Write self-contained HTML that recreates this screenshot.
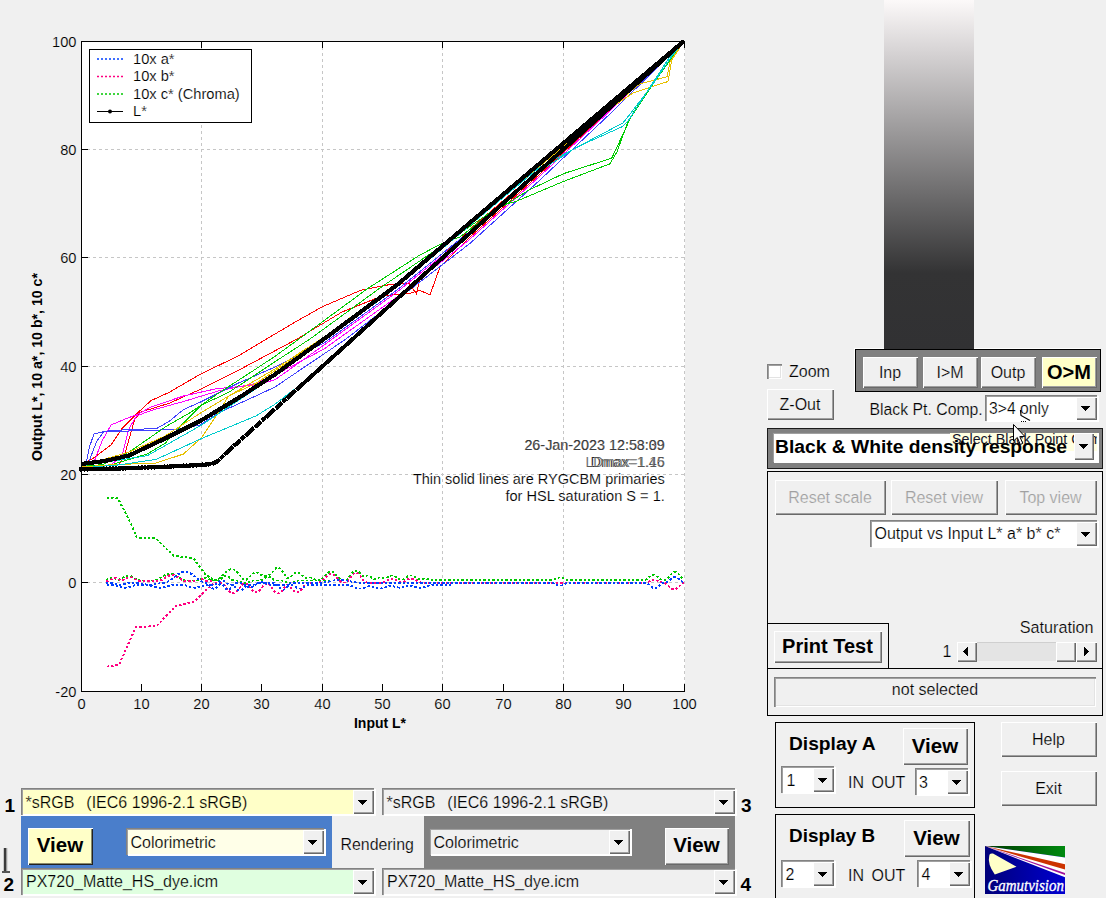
<!DOCTYPE html>
<html><head><meta charset="utf-8"><title>Gamutvision</title>
<style>
html,body{margin:0;padding:0;background:#f0f0f0;}
#root{position:relative;width:1106px;height:898px;overflow:hidden;background:#f0f0f0;font-family:"Liberation Sans",sans-serif;font-size:16px;color:#000;}
#root div{position:absolute;box-sizing:border-box;white-space:nowrap;}
.b{background:#f0f0f0;box-shadow:inset 1px 1px #fff,inset -1px -1px #696969,inset -2px -2px #a0a0a0;}
.b.y{background:#ffffc8;}
.b.dk{box-shadow:inset 1px 1px #fff,inset -1px -1px #222,inset -2px -2px #8a8a6a;}
.dd{box-shadow:inset 1px 1px #828282,inset 2px 2px #a0a0a0,inset 0 -1px #fff,2px 1px 0 #fff;}
.sunk{box-shadow:inset 1px 1px #828282,inset 2px 2px #a0a0a0,inset -1px -1px #fff,inset -2px -2px #e3e3e3;}
.ar{width:9px;height:5px;background:linear-gradient(#000,#000) 0 0/9px 1px no-repeat,linear-gradient(#000,#000) 1px 1px/7px 1px no-repeat,linear-gradient(#000,#000) 2px 2px/5px 1px no-repeat,linear-gradient(#000,#000) 3px 3px/3px 1px no-repeat,linear-gradient(#000,#000) 4px 4px/1px 1px no-repeat;}
.al{width:5px;height:9px;background:linear-gradient(#000,#000) 4px 0/1px 9px no-repeat,linear-gradient(#000,#000) 3px 1px/1px 7px no-repeat,linear-gradient(#000,#000) 2px 2px/1px 5px no-repeat,linear-gradient(#000,#000) 1px 3px/1px 3px no-repeat,linear-gradient(#000,#000) 0 4px/1px 1px no-repeat;}
.arr{width:5px;height:9px;background:linear-gradient(#000,#000) 0 0/1px 9px no-repeat,linear-gradient(#000,#000) 1px 1px/1px 7px no-repeat,linear-gradient(#000,#000) 2px 2px/1px 5px no-repeat,linear-gradient(#000,#000) 3px 3px/1px 3px no-repeat,linear-gradient(#000,#000) 4px 4px/1px 1px no-repeat;}
.fr{border:1px solid #000;}

</style></head><body>
<div id="root">
<svg width="1106" height="898" style="position:absolute;left:0;top:0" font-family="Liberation Sans, sans-serif">
<rect x="81" y="41" width="604" height="651" fill="#fff"/>
<line x1="201.5" y1="41" x2="201.5" y2="691" stroke="#c6c6c6" stroke-width="1" stroke-dasharray="3 3"/>
<line x1="322.5" y1="41" x2="322.5" y2="691" stroke="#c6c6c6" stroke-width="1" stroke-dasharray="3 3"/>
<line x1="442.5" y1="41" x2="442.5" y2="691" stroke="#c6c6c6" stroke-width="1" stroke-dasharray="3 3"/>
<line x1="563.5" y1="41" x2="563.5" y2="691" stroke="#c6c6c6" stroke-width="1" stroke-dasharray="3 3"/>
<line x1="684.5" y1="41" x2="684.5" y2="691" stroke="#c6c6c6" stroke-width="1" stroke-dasharray="3 3"/>
<line x1="81" y1="582.5" x2="684" y2="582.5" stroke="#c6c6c6" stroke-width="1" stroke-dasharray="3 3"/>
<line x1="81" y1="474.5" x2="684" y2="474.5" stroke="#c6c6c6" stroke-width="1" stroke-dasharray="3 3"/>
<line x1="81" y1="366.5" x2="684" y2="366.5" stroke="#c6c6c6" stroke-width="1" stroke-dasharray="3 3"/>
<line x1="81" y1="257.5" x2="684" y2="257.5" stroke="#c6c6c6" stroke-width="1" stroke-dasharray="3 3"/>
<line x1="81" y1="149.5" x2="684" y2="149.5" stroke="#c6c6c6" stroke-width="1" stroke-dasharray="3 3"/>
<polyline points="81.0,465.0 93.0,458.4 111.0,444.9 122.0,428.6 138.3,412.3 151.0,400.6 169.0,392.4 201.6,373.5 237.7,356.3 264.9,340.0 293.5,323.0 322.4,306.7 360.4,290.4 387.5,285.0 409.0,283.0 416.5,294.0 420.0,277.8 469.0,230.0 540.0,169.0 612.0,106.0 684.0,41.0" fill="none" stroke="#ff0000" stroke-width="1" stroke-linejoin="round" shape-rendering="crispEdges" />
<polyline points="81.0,466.0 118.4,464.8 123.8,457.5 134.7,419.6 140.0,412.3 169.0,403.3 201.6,388.8 237.7,370.7 275.0,350.8 297.0,339.0 342.0,312.0 382.0,296.0 411.0,293.0 420.0,290.4 430.0,295.0 440.0,267.0 469.0,238.0 540.0,174.0 612.0,108.0 684.0,41.0" fill="none" stroke="#ff0000" stroke-width="1" stroke-linejoin="round" shape-rendering="crispEdges" />
<polyline points="81.0,466.0 93.0,464.8 102.0,441.0 111.0,425.0 123.8,419.6 138.3,414.0 151.0,407.0 183.5,396.0 216.0,388.8 255.8,385.0 275.0,379.8 324.0,345.0 397.0,292.0 469.0,234.0 540.0,172.0 612.0,107.0 684.0,41.0" fill="none" stroke="#ff00ff" stroke-width="1" stroke-linejoin="round" shape-rendering="crispEdges" />
<polyline points="81.0,467.0 111.0,464.8 122.0,455.7 129.0,428.6 136.5,416.0 151.0,410.5 183.5,401.5 219.7,390.6 255.8,383.4 275.0,375.0 324.0,349.0 397.0,297.0 469.0,240.0 540.0,176.0 612.0,109.0 684.0,41.0" fill="none" stroke="#ff00ff" stroke-width="1" stroke-linejoin="round" shape-rendering="crispEdges" />
<polyline points="81.0,466.0 85.8,464.8 89.5,446.7 94.0,434.0 102.0,431.9 147.3,430.4 176.3,429.5 199.8,425.0 219.7,412.3 255.8,396.0 275.0,387.0 346.0,339.0 470.0,243.4 540.0,180.0 612.0,112.0 684.0,41.0" fill="none" stroke="#4040ff" stroke-width="1" stroke-linejoin="round" shape-rendering="crispEdges" />
<polyline points="81.0,467.0 87.7,464.8 96.7,441.3 104.0,431.3 129.2,429.5 156.4,428.6 169.0,421.4 183.5,409.6 201.6,401.5 237.7,383.4 275.0,367.0 324.0,343.0 397.0,290.0 469.0,232.0 540.0,170.0 612.0,106.0 684.0,41.0" fill="none" stroke="#4040ff" stroke-width="1" stroke-linejoin="round" shape-rendering="crispEdges" />
<polyline points="81.0,466.0 102.0,464.8 129.2,452.0 147.3,439.5 165.4,426.8 190.7,412.3 219.7,392.4 255.8,369.0 275.0,356.3 299.0,339.0 367.6,288.6 418.3,256.0 441.8,243.4 460.0,237.0 490.0,214.0 529.0,190.0 563.6,173.6 611.7,158.2 618.6,143.6 630.6,117.8 654.6,81.7 684.0,41.0" fill="none" stroke="#00cc00" stroke-width="1" stroke-linejoin="round" shape-rendering="crispEdges" />
<polyline points="81.0,467.0 111.0,464.8 147.3,454.0 165.4,443.0 183.5,423.0 201.6,405.0 228.7,392.4 275.0,361.7 310.0,339.0 380.0,288.0 430.0,254.0 460.0,233.0 500.0,206.0 517.0,201.0 563.6,181.4 610.0,163.8 616.8,152.2 628.9,119.5 653.0,82.5 684.0,41.0" fill="none" stroke="#00cc00" stroke-width="1" stroke-linejoin="round" shape-rendering="crispEdges" />
<polyline points="81.0,466.0 129.2,452.0 165.4,435.8 201.6,412.3 237.7,390.6 275.0,369.0 324.0,337.0 397.0,283.0 469.0,224.0 540.0,165.0 600.0,115.0 633.0,93.0 668.0,81.5 671.7,60.4 684.0,41.0" fill="none" stroke="#e6c000" stroke-width="1" stroke-linejoin="round" shape-rendering="crispEdges" />
<polyline points="81.0,467.0 111.0,464.8 156.4,463.0 183.5,454.0 201.6,437.6 216.0,416.0 228.7,396.0 255.8,383.4 275.0,370.7 324.0,338.0 397.0,284.0 469.0,225.0 540.0,166.0 610.0,108.0 640.0,83.8 667.0,76.8 670.0,62.0 684.0,41.0" fill="none" stroke="#e6c000" stroke-width="1" stroke-linejoin="round" shape-rendering="crispEdges" />
<polyline points="81.0,468.0 120.0,464.8 156.4,459.3 201.6,438.5 255.8,416.0 275.0,404.2 300.0,385.0 350.0,341.0 418.0,279.0 469.0,234.0 540.0,171.0 575.6,147.9 622.9,123.0 630.6,113.5 654.6,81.7 670.5,58.0 684.0,41.0" fill="none" stroke="#00cccc" stroke-width="1" stroke-linejoin="round" shape-rendering="crispEdges" />
<polyline points="81.0,466.0 147.3,455.7 201.6,425.0 275.0,376.0 324.0,341.0 397.0,287.0 469.0,226.0 540.0,167.0 580.8,145.3 622.9,126.4 628.0,121.2 652.0,84.0 669.0,58.0 684.0,41.0" fill="none" stroke="#00cccc" stroke-width="1" stroke-linejoin="round" shape-rendering="crispEdges" />
<polyline points="106.7,497.8 117.9,498.3 131.2,524.5 136.8,537.5 155.7,538.4 173.5,555.7 193.6,558.4 204.7,573.5 212.0,579.0 214.0,580.4 216.0,580.0 218.0,579.0 220.0,577.8 222.0,576.2 224.0,574.0 226.0,571.9 228.0,570.3 230.0,569.4 232.0,569.2 234.0,569.6 236.0,570.8 238.0,572.9 240.0,575.6 242.0,578.0 244.0,579.8 246.0,579.9 248.0,578.4 250.0,576.4 252.0,574.4 254.0,572.9 256.0,572.4 258.0,572.9 260.0,574.2 262.0,575.2 264.0,575.6 266.0,576.0 268.0,575.7 270.0,574.4 272.0,572.7 274.0,570.5 276.0,568.3 278.0,567.4 280.0,568.3 282.0,570.6 284.0,573.9 286.0,577.0 288.0,578.4 290.0,577.4 292.0,575.4 294.0,573.6 296.0,572.5 298.0,572.5 300.0,573.6 302.0,575.4 304.0,577.0 306.0,577.7 308.0,577.7 310.0,577.4 312.0,577.8 314.0,578.9 316.0,580.0 318.0,580.4 320.0,580.2 322.0,579.1 324.0,577.1 326.0,574.7 328.0,572.7 330.0,571.6 332.0,571.6 334.0,572.7 336.0,574.7 338.0,577.1 340.0,579.1 342.0,580.2 344.0,580.4 346.0,580.2 348.0,578.7 350.0,576.1 352.0,573.3 354.0,571.2 356.0,570.4 358.0,571.2 360.0,573.3 362.0,575.4 364.0,576.2 366.0,575.9 368.0,575.4 370.0,576.1 372.0,577.9 374.0,579.2 376.0,578.9 378.0,577.8 380.0,577.4 382.0,577.7 384.0,578.0 386.0,577.8 388.0,576.9 390.0,575.8 392.0,575.4 394.0,575.8 396.0,576.9 398.0,578.3 400.0,579.5 402.0,579.9 404.0,578.9 406.0,577.5 408.0,576.3 410.0,575.5 412.0,575.5 414.0,576.3 416.0,577.5 418.0,578.9 420.0,579.4 422.0,579.0 424.0,578.5 426.0,578.5 428.0,579.0 430.0,579.8 432.0,580.3 434.0,580.4 436.0,580.4 438.0,580.4 440.0,580.4 442.0,580.4 444.0,580.4 446.0,580.4 448.0,580.4 450.0,580.4 452.0,580.4 454.0,580.4 456.0,580.4 458.0,580.4 460.0,580.4 462.0,580.4 464.0,580.4 466.0,580.4 468.0,580.4 470.0,580.4 472.0,580.4 474.0,580.4 476.0,580.4 478.0,580.4 480.0,580.4 482.0,580.4 484.0,580.4 486.0,580.4 488.0,580.4 490.0,580.4 492.0,580.4 494.0,580.4 496.0,580.4 498.0,580.4 500.0,580.4 502.0,580.4 504.0,580.4 506.0,580.4 508.0,580.4 510.0,580.4 512.0,580.4 514.0,580.4 516.0,580.4 518.0,580.4 520.0,580.4 522.0,580.4 524.0,580.4 526.0,580.4 528.0,580.4 530.0,580.4 532.0,580.4 534.0,580.4 536.0,580.4 538.0,580.4 540.0,580.4 542.0,580.4 544.0,580.4 546.0,580.4 548.0,580.4 550.0,580.4 552.0,580.3 554.0,579.6 556.0,578.6 558.0,577.8 560.0,577.4 562.0,577.8 564.0,578.6 566.0,579.6 568.0,580.3 570.0,580.4 572.0,580.4 574.0,580.4 576.0,580.4 578.0,580.4 580.0,580.4 582.0,580.4 584.0,580.4 586.0,580.4 588.0,580.4 590.0,580.4 592.0,580.4 594.0,580.4 596.0,580.4 598.0,580.4 600.0,580.4 602.0,580.4 604.0,580.4 606.0,580.4 608.0,580.4 610.0,580.4 612.0,580.4 614.0,580.4 616.0,580.4 618.0,580.4 620.0,580.4 622.0,580.4 624.0,580.4 626.0,580.4 628.0,580.4 630.0,580.4 632.0,580.4 634.0,580.4 636.0,580.4 638.0,580.4 640.0,580.4 642.0,580.4 644.0,580.4 646.0,579.6 648.0,578.1 650.0,576.4 652.0,575.1 654.0,574.8 656.0,575.6 658.0,577.1 660.0,578.8 662.0,580.1 664.0,580.4 666.0,579.7 668.0,577.9 670.0,575.6 672.0,573.4 674.0,572.2 676.0,572.2 678.0,573.4 680.0,575.6 682.0,577.9 684.0,579.7" fill="none" stroke="#00c800" stroke-width="1.9" stroke-linejoin="round" shape-rendering="crispEdges" stroke-dasharray="2.4 2"/>
<polyline points="106.7,666.6 119.0,664.9 135.7,627.4 156.8,625.9 175.8,605.8 193.6,602.0 204.7,591.4 212.0,585.0 214.0,582.6 216.0,582.6 218.0,582.6 220.0,582.6 222.0,583.2 224.0,585.0 226.0,587.4 228.0,590.1 230.0,592.2 232.0,593.4 234.0,593.4 236.0,592.2 238.0,590.1 240.0,587.4 242.0,585.0 244.0,583.2 246.0,583.3 248.0,585.1 250.0,587.6 252.0,590.1 254.0,591.9 256.0,592.6 258.0,591.9 260.0,590.1 262.0,587.6 264.0,585.1 266.0,583.3 268.0,583.3 270.0,585.4 272.0,588.1 274.0,590.9 276.0,592.9 278.0,593.6 280.0,592.9 282.0,590.9 284.0,588.1 286.0,585.5 288.0,584.8 290.0,586.3 292.0,588.9 294.0,591.1 296.0,592.4 298.0,592.4 300.0,591.1 302.0,588.9 304.0,586.3 306.0,584.1 308.0,582.8 310.0,582.6 312.0,582.6 314.0,582.6 316.0,582.6 318.0,582.6 320.0,582.4 322.0,581.3 324.0,579.3 326.0,576.9 328.0,574.9 330.0,573.8 332.0,573.8 334.0,574.9 336.0,576.9 338.0,579.3 340.0,581.3 342.0,582.4 344.0,582.6 346.0,582.4 348.0,580.9 350.0,578.3 352.0,575.5 354.0,573.4 356.0,572.6 358.0,573.4 360.0,575.5 362.0,578.3 364.0,580.9 366.0,582.4 368.0,582.6 370.0,582.6 372.0,582.6 374.0,582.6 376.0,582.6 378.0,582.6 380.0,582.6 382.0,582.5 384.0,581.9 386.0,580.9 388.0,579.8 390.0,578.9 392.0,578.6 394.0,578.9 396.0,579.8 398.0,580.9 400.0,581.9 402.0,582.2 404.0,581.4 406.0,580.3 408.0,579.3 410.0,578.7 412.0,578.7 414.0,579.3 416.0,580.3 418.0,581.4 420.0,582.3 422.0,582.6 424.0,582.6 426.0,582.6 428.0,582.6 430.0,582.6 432.0,582.6 434.0,582.6 436.0,582.6 438.0,582.6 440.0,582.6 442.0,582.6 444.0,582.6 446.0,582.6 448.0,582.6 450.0,582.6 452.0,582.6 454.0,582.6 456.0,582.6 458.0,582.6 460.0,582.6 462.0,582.6 464.0,582.6 466.0,582.6 468.0,582.6 470.0,582.6 472.0,582.6 474.0,582.6 476.0,582.6 478.0,582.6 480.0,582.6 482.0,582.6 484.0,582.6 486.0,582.6 488.0,582.6 490.0,582.6 492.0,582.6 494.0,582.6 496.0,582.6 498.0,582.6 500.0,582.6 502.0,582.6 504.0,582.6 506.0,582.6 508.0,582.6 510.0,582.6 512.0,582.6 514.0,582.6 516.0,582.6 518.0,582.6 520.0,582.6 522.0,582.6 524.0,582.6 526.0,582.6 528.0,582.6 530.0,582.6 532.0,582.6 534.0,582.6 536.0,582.6 538.0,582.6 540.0,582.6 542.0,582.6 544.0,582.6 546.0,582.6 548.0,582.6 550.0,582.6 552.0,582.6 554.0,582.6 556.0,582.6 558.0,582.6 560.0,582.6 562.0,582.6 564.0,582.6 566.0,582.6 568.0,582.6 570.0,582.6 572.0,582.6 574.0,582.6 576.0,582.6 578.0,582.6 580.0,582.6 582.0,582.6 584.0,582.6 586.0,582.6 588.0,582.6 590.0,582.6 592.0,582.6 594.0,582.6 596.0,582.6 598.0,582.6 600.0,582.6 602.0,582.6 604.0,582.6 606.0,582.6 608.0,582.6 610.0,582.6 612.0,582.6 614.0,582.6 616.0,582.6 618.0,582.6 620.0,582.6 622.0,582.6 624.0,582.6 626.0,582.6 628.0,582.6 630.0,582.6 632.0,582.6 634.0,582.6 636.0,582.6 638.0,582.6 640.0,582.6 642.0,582.6 644.0,582.6 646.0,582.5 648.0,581.9 650.0,580.8 652.0,580.0 654.0,579.6 656.0,580.0 658.0,580.8 660.0,581.9 662.0,582.5 664.0,582.7 666.0,583.8 668.0,585.6 670.0,587.6 672.0,589.0 674.0,589.6 676.0,589.0 678.0,587.6 680.0,585.6 682.0,583.8 684.0,582.7" fill="none" stroke="#ff0080" stroke-width="1.9" stroke-linejoin="round" shape-rendering="crispEdges" stroke-dasharray="2.4 2"/>
<polyline points="106.0,580.1 108.0,579.0 110.0,577.9 112.0,577.5 114.0,577.9 116.0,579.0 118.0,579.7 120.0,579.2 122.0,578.0 124.0,576.8 126.0,575.8 128.0,575.5 130.0,575.8 132.0,576.8 134.0,578.0 136.0,579.2 138.0,580.2 140.0,580.5 142.0,580.5 144.0,580.5 146.0,580.5 148.0,580.5 150.0,580.5 152.0,580.5 154.0,580.5 156.0,580.2 158.0,579.5 160.0,578.3 162.0,577.0 164.0,575.7 166.0,574.5 168.0,573.8 170.0,573.5 172.0,573.8 174.0,574.5 176.0,575.7 178.0,577.0 180.0,578.3 182.0,579.5 184.0,580.2 186.0,580.5 188.0,580.5 190.0,580.5 192.0,580.5 194.0,580.5 196.0,580.5 198.0,580.4 200.0,579.6 202.0,578.4 204.0,577.6 206.0,577.6 208.0,578.4 210.0,579.6 212.0,580.4 214.0,580.5 216.0,580.5 218.0,580.5 220.0,579.8 222.0,578.0 224.0,576.2 226.0,575.5 228.0,576.2 230.0,578.0 232.0,579.8 234.0,580.5 236.0,580.5 238.0,580.6 240.0,581.4 242.0,582.6 244.0,583.4 246.0,583.4 248.0,582.6 250.0,581.4 252.0,580.6 254.0,580.5 256.0,580.5 258.0,580.5 260.0,580.5 262.0,579.9 264.0,578.5 266.0,577.1 268.0,576.5 270.0,577.1 272.0,578.5 274.0,579.9 276.0,580.5 278.0,580.5 280.0,580.5 282.0,580.5 284.0,580.9 286.0,582.0 288.0,583.1 290.0,583.5 292.0,583.1 294.0,582.0 296.0,580.9 298.0,580.5 300.0,580.5 302.0,580.5 304.0,580.5 306.0,580.5 308.0,580.5 310.0,580.5 312.0,580.5 314.0,580.5 316.0,580.5 318.0,580.5 320.0,580.5 322.0,580.5 324.0,580.5 326.0,580.5 328.0,580.5 330.0,580.5" fill="none" stroke="#00c800" stroke-width="1.9" stroke-linejoin="round" shape-rendering="crispEdges" stroke-dasharray="2.4 2"/>
<polyline points="106.0,581.0 108.0,580.9 110.0,580.1 112.0,578.9 114.0,578.1 116.0,578.1 118.0,578.9 120.0,580.1 122.0,580.5 124.0,579.6 126.0,578.4 128.0,577.4 130.0,577.0 132.0,577.4 134.0,578.4 136.0,579.6 138.0,580.6 140.0,581.0 142.0,581.0 144.0,581.0 146.0,581.0 148.0,581.0 150.0,581.0 152.0,581.0 154.0,581.0 156.0,581.0 158.0,581.0 160.0,580.7 162.0,579.9 164.0,578.7 166.0,577.3 168.0,576.1 170.0,575.3 172.0,575.0 174.0,575.3 176.0,576.1 178.0,577.3 180.0,578.7 182.0,579.9 184.0,580.7 186.0,581.0 188.0,581.0 190.0,581.0 192.0,581.0 194.0,580.7 196.0,580.0 198.0,579.3 200.0,579.0 202.0,579.3 204.0,580.0 206.0,580.7 208.0,581.0 210.0,581.0 212.0,581.0 214.0,581.0" fill="none" stroke="#ff0080" stroke-width="1.9" stroke-linejoin="round" shape-rendering="crispEdges" stroke-dasharray="2.4 2"/>
<polyline points="106.0,582.8 108.0,582.8 110.0,582.9 112.0,583.3 114.0,583.8 116.0,584.3 118.0,584.7 120.0,584.8 122.0,584.7 124.0,584.3 126.0,583.8 128.0,583.3 130.0,582.9 132.0,582.8 134.0,582.8 136.0,582.8 138.0,582.9 140.0,583.2 142.0,583.6 144.0,584.0 146.0,584.4 148.0,584.7 150.0,584.8 152.0,584.7 154.0,584.4 156.0,584.0 158.0,583.6 160.0,583.2 162.0,582.9 164.0,582.7 166.0,582.3 168.0,581.5 170.0,580.3 172.0,578.8 174.0,577.3 176.0,575.8 178.0,574.3 180.0,573.1 182.0,572.3 184.0,571.9 186.0,571.9 188.0,572.3 190.0,573.1 192.0,574.3 194.0,575.8 196.0,577.3 198.0,578.8 200.0,580.3 202.0,581.5 204.0,582.3 206.0,582.9 208.0,584.3 210.0,586.3 212.0,588.1 214.0,588.8 216.0,588.1 218.0,586.3 220.0,584.3 222.0,584.0 224.0,586.3 226.0,588.8 228.0,589.8 230.0,588.8 232.0,586.3 234.0,583.8 236.0,582.8 238.0,582.8 240.0,582.8 242.0,583.3 244.0,584.5 246.0,586.1 248.0,587.3 250.0,587.8 252.0,587.3 254.0,586.1 256.0,584.5 258.0,583.3 260.0,582.8 262.0,582.8 264.0,582.8 266.0,582.8 268.0,582.8 270.0,582.8 272.0,582.8 274.0,582.8 276.0,583.6 278.0,585.7 280.0,588.0 282.0,589.6 284.0,589.6 286.0,588.0 288.0,585.7 290.0,583.6 292.0,582.8 294.0,582.8 296.0,582.8 298.0,582.8 300.0,582.8 302.0,582.8 304.0,582.8 306.0,582.8 308.0,582.8 310.0,582.8 312.0,582.8 314.0,582.8 316.0,582.8 318.0,582.8 320.0,582.8 322.0,582.7 324.0,582.5 326.0,582.2 328.0,581.8 330.0,581.3 332.0,580.8 334.0,580.4 336.0,580.1 338.0,579.9 340.0,579.8 342.0,579.9 344.0,580.1 346.0,580.4 348.0,580.8 350.0,581.3 352.0,581.8 354.0,582.2 356.0,582.5 358.0,582.7 360.0,582.8 362.0,582.8 364.0,582.8 366.0,582.8 368.0,582.8 370.0,582.8 372.0,582.8 374.0,582.8 376.0,582.8 378.0,582.8 380.0,582.8 382.0,582.8 384.0,582.8 386.0,582.8 388.0,582.8 390.0,582.8 392.0,582.8 394.0,582.8 396.0,582.8 398.0,582.8 400.0,582.8 402.0,582.8 404.0,582.8 406.0,582.8 408.0,582.8 410.0,582.8 412.0,582.8 414.0,582.8 416.0,582.8 418.0,582.8 420.0,582.8 422.0,582.8 424.0,582.8 426.0,582.8 428.0,582.8 430.0,582.8 432.0,582.8 434.0,582.8 436.0,582.8 438.0,582.8 440.0,582.8 442.0,582.8 444.0,582.8 446.0,582.8 448.0,582.8 450.0,582.8 452.0,582.8 454.0,582.8 456.0,582.8 458.0,582.8 460.0,582.8 462.0,582.8 464.0,582.8 466.0,582.8 468.0,582.8 470.0,582.8 472.0,582.8 474.0,582.8 476.0,582.8 478.0,582.8 480.0,582.8 482.0,582.8 484.0,582.8 486.0,582.8 488.0,582.8 490.0,582.8 492.0,582.8 494.0,582.8 496.0,582.8 498.0,582.8 500.0,582.8 502.0,582.8 504.0,582.8 506.0,582.8 508.0,582.8 510.0,582.8 512.0,582.8 514.0,582.8 516.0,582.8 518.0,582.8 520.0,582.8 522.0,582.8 524.0,582.8 526.0,582.8 528.0,582.8 530.0,582.8 532.0,582.8 534.0,582.8 536.0,582.8 538.0,582.8 540.0,582.8 542.0,582.8 544.0,582.8 546.0,582.8 548.0,582.8 550.0,582.8 552.0,582.9 554.0,583.5 556.0,584.6 558.0,585.4 560.0,585.8 562.0,585.4 564.0,584.6 566.0,583.5 568.0,582.9 570.0,582.8 572.0,582.8 574.0,582.8 576.0,582.8 578.0,582.8 580.0,582.8 582.0,582.8 584.0,582.8 586.0,582.8 588.0,582.8 590.0,582.8 592.0,582.8 594.0,582.8 596.0,582.8 598.0,582.8 600.0,582.8 602.0,582.8 604.0,582.8 606.0,582.8 608.0,582.8 610.0,582.8 612.0,582.8 614.0,582.8 616.0,582.8 618.0,582.8 620.0,582.8 622.0,582.8 624.0,582.8 626.0,582.8 628.0,582.8 630.0,582.8 632.0,582.8 634.0,582.8 636.0,582.8 638.0,582.8 640.0,582.8 642.0,582.8 644.0,582.8 646.0,582.8 648.0,583.7 650.0,585.4 652.0,587.2 654.0,588.3 656.0,588.1 658.0,586.7 660.0,584.8 662.0,583.3 664.0,582.8 666.0,582.7 668.0,581.6 670.0,580.0 672.0,578.4 674.0,577.3 676.0,577.3 678.0,578.4 680.0,580.0 682.0,581.6 684.0,582.7" fill="none" stroke="#0040ff" stroke-width="1.9" stroke-linejoin="round" shape-rendering="crispEdges" stroke-dasharray="2.4 2"/>
<polyline points="107.0,584.6 109.0,584.6 111.0,584.6 113.0,584.7 115.0,585.2 117.0,585.8 119.0,586.4 121.0,587.0 123.0,587.5 125.0,587.6 127.0,587.5 129.0,587.0 131.0,586.4 133.0,585.8 135.0,585.2 137.0,584.7 139.0,584.6 141.0,584.6 143.0,584.6 145.0,584.6 147.0,584.9 149.0,585.3 151.0,585.8 153.0,586.4 155.0,586.9 157.0,587.3 159.0,587.6 161.0,587.6 163.0,587.3 165.0,586.9 167.0,586.4 169.0,585.8 171.0,585.3 173.0,584.9 175.0,584.6 177.0,584.6 179.0,584.6 181.0,584.6 183.0,584.7 185.0,585.2 187.0,585.8 189.0,586.4 191.0,587.0 193.0,587.5 195.0,587.6 197.0,587.5 199.0,587.0 201.0,586.4 203.0,585.8 205.0,585.2 207.0,584.7 209.0,584.6 211.0,584.6 213.0,584.6 215.0,584.4 217.0,583.4 219.0,581.8 221.0,580.8 223.0,580.8 225.0,581.8 227.0,583.4 229.0,584.4 231.0,584.6 233.0,585.3 235.0,587.1 237.0,589.1 239.0,590.4 241.0,590.4 243.0,589.1 245.0,587.1 247.0,585.3 249.0,584.6 251.0,584.6 253.0,584.6 255.0,584.5 257.0,583.7 259.0,582.5 261.0,581.7 263.0,581.7 265.0,582.5 267.0,583.7 269.0,584.5 271.0,584.6 273.0,584.6 275.0,584.6 277.0,584.6 279.0,584.6 281.0,584.6 283.0,584.6 285.0,584.6 287.0,584.6 289.0,584.6 291.0,584.7 293.0,585.4 295.0,586.6 297.0,587.8 299.0,588.5 301.0,588.5 303.0,587.8 305.0,586.6 307.0,585.4 309.0,584.7 311.0,584.6 313.0,584.6 315.0,584.6 317.0,584.6 319.0,584.6 321.0,584.6 323.0,584.6 325.0,584.6 327.0,584.6 329.0,584.6 331.0,584.6 333.0,584.6 335.0,584.6 337.0,584.6 339.0,584.6 341.0,584.6 343.0,584.6 345.0,584.6 347.0,584.7 349.0,585.0 351.0,585.7 353.0,586.6 355.0,587.5 357.0,588.2 359.0,588.5 361.0,588.5 363.0,588.2 365.0,587.5 367.0,586.7 369.0,586.2 371.0,586.2 373.0,586.7 375.0,587.5 377.0,588.2 379.0,588.5 381.0,588.5 383.0,588.2 385.0,587.5 387.0,586.6 389.0,586.1 391.0,585.9 393.0,586.2 395.0,586.8 397.0,587.3 399.0,587.6 401.0,587.6 403.0,587.3 405.0,586.8 407.0,586.1 409.0,585.8 411.0,585.8 413.0,586.1 415.0,586.8 417.0,587.3 419.0,587.6 421.0,587.6 423.0,587.3 425.0,586.8 427.0,586.1 429.0,585.4 431.0,584.9 433.0,584.6 435.0,584.6 437.0,584.6 439.0,584.6 441.0,584.6 443.0,584.6 445.0,584.6 447.0,584.6 449.0,584.6 451.0,584.6" fill="none" stroke="#0040ff" stroke-width="1.9" stroke-linejoin="round" shape-rendering="crispEdges" stroke-dasharray="2.4 2"/>
<polyline points="81.0,464.0 105.0,461.0 129.0,455.5 165.0,438.6 201.0,420.5 240.0,397.0 275.0,374.4 324.0,339.0 397.0,285.0 469.0,223.5 540.0,163.2 612.0,102.0 684.0,41.0" fill="none" stroke="#000" stroke-width="4.2" stroke-linejoin="round" shape-rendering="crispEdges" />
<polyline points="81.0,469.3 120.0,468.5 160.0,467.0 200.0,465.0 212.0,464.0" fill="none" stroke="#000" stroke-width="2.5" stroke-linejoin="round" shape-rendering="crispEdges" />
<polyline points="81.0,469.3 120.0,468.5 160.0,467.0 200.0,465.0 212.0,464.0" fill="none" stroke="#000" stroke-width="4.8" stroke-linejoin="round" shape-rendering="crispEdges" stroke-dasharray="0.1 3.1" stroke-linecap="round"/>
<polyline points="212.0,464.0 218.0,461.0 225.0,454.0 275.0,409.0 300.0,386.5" fill="none" stroke="#000" stroke-width="4.2" stroke-linejoin="round" shape-rendering="crispEdges" stroke-dasharray="9 0.8 5 0.6 12 0.8"/>
<polyline points="299.0,387.4 350.0,341.5 418.0,280.0 469.0,234.0 684.0,41.0" fill="none" stroke="#000" stroke-width="4.0" stroke-linejoin="round" shape-rendering="crispEdges" />
<path d="M81.5 41 V691.5 H685 M81 41.5 H685" stroke="#000" stroke-width="1" fill="none"/>
<line x1="81.5" y1="691" x2="81.5" y2="684" stroke="#000"/>
<line x1="81.5" y1="41" x2="81.5" y2="48" stroke="#000"/>
<text x="81.5" y="709" font-size="14.67" text-anchor="middle" stroke="#f0f0f0" stroke-width="0.15">0</text>
<line x1="141.5" y1="691" x2="141.5" y2="684" stroke="#000"/>
<text x="141.5" y="709" font-size="14.67" text-anchor="middle" stroke="#f0f0f0" stroke-width="0.15">10</text>
<line x1="201.5" y1="691" x2="201.5" y2="684" stroke="#000"/>
<line x1="201.5" y1="41" x2="201.5" y2="48" stroke="#000"/>
<text x="201.5" y="709" font-size="14.67" text-anchor="middle" stroke="#f0f0f0" stroke-width="0.15">20</text>
<line x1="261.5" y1="691" x2="261.5" y2="684" stroke="#000"/>
<text x="261.5" y="709" font-size="14.67" text-anchor="middle" stroke="#f0f0f0" stroke-width="0.15">30</text>
<line x1="322.5" y1="691" x2="322.5" y2="684" stroke="#000"/>
<line x1="322.5" y1="41" x2="322.5" y2="48" stroke="#000"/>
<text x="322.5" y="709" font-size="14.67" text-anchor="middle" stroke="#f0f0f0" stroke-width="0.15">40</text>
<line x1="382.5" y1="691" x2="382.5" y2="684" stroke="#000"/>
<text x="382.5" y="709" font-size="14.67" text-anchor="middle" stroke="#f0f0f0" stroke-width="0.15">50</text>
<line x1="442.5" y1="691" x2="442.5" y2="684" stroke="#000"/>
<line x1="442.5" y1="41" x2="442.5" y2="48" stroke="#000"/>
<text x="442.5" y="709" font-size="14.67" text-anchor="middle" stroke="#f0f0f0" stroke-width="0.15">60</text>
<line x1="503.5" y1="691" x2="503.5" y2="684" stroke="#000"/>
<text x="503.5" y="709" font-size="14.67" text-anchor="middle" stroke="#f0f0f0" stroke-width="0.15">70</text>
<line x1="563.5" y1="691" x2="563.5" y2="684" stroke="#000"/>
<line x1="563.5" y1="41" x2="563.5" y2="48" stroke="#000"/>
<text x="563.5" y="709" font-size="14.67" text-anchor="middle" stroke="#f0f0f0" stroke-width="0.15">80</text>
<line x1="623.5" y1="691" x2="623.5" y2="684" stroke="#000"/>
<text x="623.5" y="709" font-size="14.67" text-anchor="middle" stroke="#f0f0f0" stroke-width="0.15">90</text>
<line x1="684.5" y1="691" x2="684.5" y2="684" stroke="#000"/>
<line x1="684.5" y1="41" x2="684.5" y2="48" stroke="#000"/>
<text x="684.5" y="709" font-size="14.67" text-anchor="middle" stroke="#f0f0f0" stroke-width="0.15">100</text>
<line x1="81" y1="691.5" x2="88" y2="691.5" stroke="#000"/>
<text x="76.5" y="696.5" font-size="14.67" text-anchor="end" stroke="#f0f0f0" stroke-width="0.15">-20</text>
<line x1="81" y1="582.5" x2="88" y2="582.5" stroke="#000"/>
<text x="76.5" y="587.5" font-size="14.67" text-anchor="end" stroke="#f0f0f0" stroke-width="0.15">0</text>
<line x1="81" y1="474.5" x2="88" y2="474.5" stroke="#000"/>
<text x="76.5" y="479.5" font-size="14.67" text-anchor="end" stroke="#f0f0f0" stroke-width="0.15">20</text>
<line x1="81" y1="366.5" x2="88" y2="366.5" stroke="#000"/>
<text x="76.5" y="371.5" font-size="14.67" text-anchor="end" stroke="#f0f0f0" stroke-width="0.15">40</text>
<line x1="81" y1="257.5" x2="88" y2="257.5" stroke="#000"/>
<text x="76.5" y="262.5" font-size="14.67" text-anchor="end" stroke="#f0f0f0" stroke-width="0.15">60</text>
<line x1="81" y1="149.5" x2="88" y2="149.5" stroke="#000"/>
<text x="76.5" y="154.5" font-size="14.67" text-anchor="end" stroke="#f0f0f0" stroke-width="0.15">80</text>
<line x1="81" y1="41.5" x2="88" y2="41.5" stroke="#000"/>
<text x="76.5" y="46.5" font-size="14.67" text-anchor="end" stroke="#f0f0f0" stroke-width="0.15">100</text>
<text x="380" y="728" font-size="14" font-weight="bold" text-anchor="middle">Input L*</text>
<text transform="translate(42,367) rotate(-90)" font-size="14.15" font-weight="bold" text-anchor="middle">Output L*, 10 a*, 10 b*, 10 c*</text>
<rect x="89.5" y="49.5" width="162" height="73" fill="#fff" stroke="#000"/>
<line x1="97" y1="59" x2="123" y2="59" stroke="#0040ff" stroke-width="1.6" stroke-dasharray="2 2"/>
<text x="133" y="63.7" font-size="14.67" stroke="#fff" stroke-width="0.15">10x a*</text>
<line x1="97" y1="76.5" x2="123" y2="76.5" stroke="#ff0080" stroke-width="1.6" stroke-dasharray="2 2"/>
<text x="133" y="81.2" font-size="14.67" stroke="#fff" stroke-width="0.15">10x b*</text>
<line x1="97" y1="94" x2="123" y2="94" stroke="#00c800" stroke-width="1.6" stroke-dasharray="2 2"/>
<text x="133" y="98.7" font-size="14.67" stroke="#fff" stroke-width="0.15">10x c* (Chroma)</text>
<line x1="97" y1="111.5" x2="123" y2="111.5" stroke="#000" stroke-width="1"/><circle cx="110" cy="111.5" r="2" fill="#000"/>
<text x="133" y="116.2" font-size="14.67" stroke="#fff" stroke-width="0.15">L*</text>
<text x="524.4" y="450" font-size="14.67" textLength="140.39999999999998" lengthAdjust="spacingAndGlyphs" fill="#000" stroke="#fff" stroke-width="0.15">26-Jan-2023 12:53:09</text>
<text x="524.4" y="450" font-size="14.67" textLength="140.39999999999998" lengthAdjust="spacingAndGlyphs" fill="#3a3a3a" stroke="#fff" stroke-width="0.15">26-Jan-2023 12:58:39</text>
<text x="590.5" y="467" font-size="14.67" textLength="74.29999999999995" lengthAdjust="spacingAndGlyphs" fill="#222" stroke="#fff" stroke-width="0.15">Dmax=1.46</text>
<text x="585.6" y="467" font-size="14.67" textLength="79.19999999999993" lengthAdjust="spacingAndGlyphs" fill="#555" stroke="#fff" stroke-width="0.15">LDmax=1.15</text>
<text x="412.9" y="484" font-size="14.67" textLength="251.89999999999998" lengthAdjust="spacingAndGlyphs" fill="#000" stroke="#fff" stroke-width="0.15">Thin solid lines are RYGCBM primaries</text>
<text x="505.4" y="501" font-size="14.67" textLength="159.39999999999998" lengthAdjust="spacingAndGlyphs" fill="#000" stroke="#fff" stroke-width="0.15">for HSL saturation S = 1.</text>
</svg>
<div style="left:884px;top:0;width:90px;height:349px;z-index:1;background:linear-gradient(#fcf9f9 0,#d9d6d7 48px,#333334 273px,#313133 100%)"></div>
<div class="sunk" style="left:767px;top:364px;width:15px;height:15px;background-color:#fff"></div>
<div style="top:362.00px;font-size:16px;line-height:20px;-webkit-text-stroke:0.2px #f0f0f0;left:789.00px;">Zoom</div>
<div class="b " style="left:767px;top:389px;width:67px;height:31px"></div>
<div style="top:395.00px;font-size:16px;line-height:20px;-webkit-text-stroke:0.2px #f0f0f0;left:766.50px;width:67px;text-align:center;">Z-Out</div>
<div style="left:855px;top:349px;width:246px;height:43px;background:#808080;border:1px solid #000;box-shadow:-1px -1px #fff"></div>
<div class="b " style="left:863px;top:357px;width:55px;height:31px"></div>
<div style="top:363.00px;font-size:16px;line-height:20px;-webkit-text-stroke:0.2px #f0f0f0;left:862.50px;width:55px;text-align:center;">Inp</div>
<div class="b " style="left:923px;top:357px;width:55px;height:31px"></div>
<div style="top:363.00px;font-size:16px;line-height:20px;-webkit-text-stroke:0.2px #f0f0f0;left:922.50px;width:55px;text-align:center;">I&gt;M</div>
<div class="b " style="left:981px;top:357px;width:55px;height:31px"></div>
<div style="top:363.00px;font-size:16px;line-height:20px;-webkit-text-stroke:0.2px #f0f0f0;left:980.50px;width:55px;text-align:center;">Outp</div>
<div class="b y" style="left:1042px;top:357px;width:55px;height:31px"></div>
<div style="top:360.00px;font-size:20px;line-height:24px;font-weight:bold;left:1041.50px;width:55px;text-align:center;">O&gt;M</div>
<div style="top:400.00px;font-size:15.8px;line-height:19.8px;-webkit-text-stroke:0.2px #f0f0f0;left:869.50px;">Black Pt. Comp.</div>
<div class="dd" style="left:985px;top:395px;width:112px;height:26px;background-color:#fff"></div>
<div style="top:399.00px;font-size:15.7px;line-height:19.7px;-webkit-text-stroke:0.2px #fff;left:989.00px;">3&gt;4 only</div>
<div class="b" style="left:1076px;top:397px;width:21px;height:23px"></div>
<div class="ar" style="left:1081px;top:406px"></div>
<div style="left:767px;top:428px;width:336px;height:41px;background:#808080;border:1px solid #1a1a1a"></div>
<div class="dd" style="left:772px;top:432px;width:325px;height:30px;background-color:#fff"></div>
<div style="left:950px;top:433px;width:147px;height:18px;background:#ffffe1;overflow:hidden;font-size:14.3px;line-height:13px;color:#15152a;padding-left:2px">Select Black Point Compensation</div>
<div style="top:435.00px;font-size:19.25px;line-height:23.25px;font-weight:bold;left:775.00px;">Black &amp; White density response</div>
<div class="b" style="left:1074px;top:433px;width:20px;height:27px"></div>
<div class="ar" style="left:1079px;top:444px"></div>
<svg style="position:absolute;left:1012px;top:409px" width="22" height="40" viewBox="0 -14 22 40"><path d="M8.5 -13 L9 -7.5 L18 -2.5 M9 -1.5 h1 m1 0 h1 m1 0 h1" stroke="#000" stroke-width="1.2" fill="none"/><path d="M1.5 1.5 L1.5 18 L5.3 14.5 L8.3 21.5 L10.8 20.4 L7.8 13.6 L12.8 13.4 Z" fill="#fff" stroke="#000" stroke-width="1"/></svg>
<div class="fr" style="left:767px;top:471px;width:336px;height:245px"></div>
<div class="b " style="left:775px;top:480px;width:111px;height:35px"></div>
<div style="top:488.00px;font-size:16px;line-height:20px;-webkit-text-stroke:0.2px #f0f0f0;color:#a0a0a0;left:774.50px;width:111px;text-align:center;">Reset scale</div>
<div class="b " style="left:891px;top:480px;width:107px;height:35px"></div>
<div style="top:488.00px;font-size:16px;line-height:20px;-webkit-text-stroke:0.2px #f0f0f0;color:#a0a0a0;left:890.50px;width:107px;text-align:center;">Reset view</div>
<div class="b " style="left:1005px;top:480px;width:92px;height:35px"></div>
<div style="top:488.00px;font-size:16px;line-height:20px;-webkit-text-stroke:0.2px #f0f0f0;color:#a0a0a0;left:1004.50px;width:92px;text-align:center;">Top view</div>
<div class="dd" style="left:870px;top:520px;width:227px;height:27px;background-color:#fff"></div>
<div style="top:524.00px;font-size:16px;line-height:20px;-webkit-text-stroke:0.2px #fff;left:874.50px;">Output vs Input L* a* b* c*</div>
<div class="b" style="left:1076px;top:522px;width:21px;height:24px"></div>
<div class="ar" style="left:1081px;top:532px"></div>
<div class="fr" style="left:767px;top:623px;width:122px;height:46px"></div>
<div class="b " style="left:774px;top:631px;width:108px;height:32px"></div>
<div style="top:634.00px;font-size:20px;line-height:24px;font-weight:bold;left:773.50px;width:108px;text-align:center;">Print Test</div>
<div style="top:617.00px;font-size:16.2px;line-height:20.2px;-webkit-text-stroke:0.2px #f0f0f0;right:12.50px;">Saturation</div>
<div style="top:642.00px;font-size:16px;line-height:20px;-webkit-text-stroke:0.2px #f0f0f0;left:942.50px;">1</div>
<div style="left:957px;top:642px;width:140px;height:19px;background:#e4e4e4;box-shadow:inset 0 1px #cfcfcf"></div>
<div class="b" style="left:957px;top:642px;width:20px;height:20px"></div>
<div class="b" style="left:1076px;top:642px;width:21px;height:20px"></div>
<div class="b" style="left:1056px;top:642px;width:20px;height:20px"></div>
<div class="al" style="left:963px;top:647px"></div>
<div class="arr" style="left:1084px;top:647px"></div>
<div style="left:767px;top:668px;width:336px;height:1px;background:#000"></div>
<div class="sunk" style="left:774px;top:677px;width:322px;height:30px"></div>
<div style="top:680.00px;font-size:16px;line-height:20px;-webkit-text-stroke:0.2px #f0f0f0;left:835.00px;width:200px;text-align:center;">not selected</div>
<div class="fr" style="left:775px;top:722px;width:200px;height:86px"></div>
<div style="top:732.00px;font-size:19.2px;line-height:23.2px;font-weight:bold;left:789.00px;">Display A</div>
<div class="b " style="left:903px;top:728px;width:65px;height:37px"></div>
<div style="top:734.00px;font-size:20.5px;line-height:24.5px;font-weight:bold;left:902.50px;width:65px;text-align:center;">View</div>
<div class="dd" style="left:781px;top:766px;width:53px;height:27px;background-color:#fff"></div>
<div style="top:771.00px;font-size:16px;line-height:20px;-webkit-text-stroke:0.2px #fff;left:786.50px;">1</div>
<div class="b" style="left:813px;top:768px;width:21px;height:24px"></div>
<div class="ar" style="left:818px;top:778px"></div>
<div style="top:773.00px;font-size:16px;line-height:20px;-webkit-text-stroke:0.2px #f0f0f0;left:848.00px;">IN</div>
<div style="top:773.00px;font-size:16px;line-height:20px;-webkit-text-stroke:0.2px #f0f0f0;left:871.50px;">OUT</div>
<div class="dd" style="left:915px;top:768px;width:53px;height:27px;background-color:#fff"></div>
<div style="top:773.00px;font-size:16px;line-height:20px;-webkit-text-stroke:0.2px #fff;left:919.00px;">3</div>
<div class="b" style="left:947px;top:770px;width:21px;height:24px"></div>
<div class="ar" style="left:952px;top:780px"></div>
<div class="b " style="left:1001px;top:722px;width:96px;height:35px"></div>
<div style="top:730.00px;font-size:16px;line-height:20px;-webkit-text-stroke:0.2px #f0f0f0;left:1000.50px;width:96px;text-align:center;">Help</div>
<div class="b " style="left:1001px;top:771px;width:96px;height:35px"></div>
<div style="top:779.00px;font-size:16px;line-height:20px;-webkit-text-stroke:0.2px #f0f0f0;left:1000.50px;width:96px;text-align:center;">Exit</div>
<div class="fr" style="left:775px;top:814px;width:200px;height:90px"></div>
<div style="top:825.00px;font-size:18.9px;line-height:22.9px;font-weight:bold;left:789.00px;">Display B</div>
<div class="b " style="left:904px;top:820px;width:66px;height:37px"></div>
<div style="top:826.00px;font-size:20.5px;line-height:24.5px;font-weight:bold;left:903.50px;width:66px;text-align:center;">View</div>
<div class="dd" style="left:781px;top:860px;width:53px;height:27px;background-color:#fff"></div>
<div style="top:865.00px;font-size:16px;line-height:20px;-webkit-text-stroke:0.2px #fff;left:785.50px;">2</div>
<div class="b" style="left:813px;top:862px;width:21px;height:24px"></div>
<div class="ar" style="left:818px;top:872px"></div>
<div style="top:866.00px;font-size:16px;line-height:20px;-webkit-text-stroke:0.2px #f0f0f0;left:848.00px;">IN</div>
<div style="top:866.00px;font-size:16px;line-height:20px;-webkit-text-stroke:0.2px #f0f0f0;left:871.50px;">OUT</div>
<div class="dd" style="left:917px;top:860px;width:53px;height:27px;background-color:#fff"></div>
<div style="top:865.00px;font-size:16px;line-height:20px;-webkit-text-stroke:0.2px #fff;left:921.50px;">4</div>
<div class="b" style="left:949px;top:862px;width:21px;height:24px"></div>
<div class="ar" style="left:954px;top:872px"></div>
<svg style="position:absolute;left:985px;top:846px" width="80" height="48" viewBox="0 0 80 48" font-family="Liberation Serif, serif">
<defs><linearGradient id="lb" x1="0" x2="1" y1="0" y2="0"><stop offset="0" stop-color="#00007a"/><stop offset="1" stop-color="#0000d0"/></linearGradient>
<linearGradient id="lg" x1="0" x2="1" y1="0" y2="0"><stop offset="0" stop-color="#003800"/><stop offset="1" stop-color="#008a10"/></linearGradient></defs>
<rect width="80" height="48" fill="url(#lb)"/>
<polygon points="0,0 80,0 80,11.4" fill="url(#lg)"/>
<polygon points="0,0 80,11.4 80,31.3" fill="#fff"/>
<polygon points="0,0 80,18.3 80,23.6" fill="#cc3300"/>
<polygon points="0,0 80,26.9 80,28.9" fill="#a0109a"/>
<path d="M4.3 9.5 Q4.3 7 8 7.6 L31.5 20.7 L9.8 28.5 Q2.2 18 4.3 9.5 Z" fill="#ffffc8"/>
<text x="2.4" y="44.7" font-size="17.4" font-style="italic" fill="#fff" stroke="#fff" stroke-width="0.35" textLength="76.5" lengthAdjust="spacingAndGlyphs">Gamutvision</text>
</svg>
<div style="top:794.00px;font-size:19px;line-height:23px;font-weight:bold;left:4.50px;">1</div>
<div style="top:873.00px;font-size:19px;line-height:23px;font-weight:bold;left:3.50px;">2</div>
<div style="top:794.00px;font-size:19px;line-height:23px;font-weight:bold;left:741.00px;">3</div>
<div style="top:873.00px;font-size:19px;line-height:23px;font-weight:bold;left:740.50px;">4</div>
<div style="left:3px;top:848px;width:5px;height:24px;background:linear-gradient(90deg,#c8c8c8 0,#c8c8c8 1px,#3a3a3a 1px,#3a3a3a 3px,#9a9a9a 3px,#9a9a9a 4px,#d8d8d8 4px)"></div><div style="left:2px;top:871px;width:8px;height:2px;background:#555"></div>
<div class="dd" style="left:21px;top:788px;width:353px;height:27px;background-color:#ffffc8"></div>
<div style="top:793.00px;font-size:16px;line-height:20px;-webkit-text-stroke:0.2px #ffffc8;left:25.50px;">*sRGB&nbsp; <span style="display:inline-block;width:3px"></span>(IEC6 1996-2.1 sRGB)</div>
<div class="b" style="left:353px;top:790px;width:21px;height:24px"></div>
<div class="ar" style="left:358px;top:800px"></div>
<div style="left:21px;top:816px;width:311px;height:53px;background:#4a7ecb"></div>
<div class="b y dk" style="left:28px;top:828px;width:65px;height:37px"></div>
<div style="top:833.00px;font-size:20.5px;line-height:24.5px;font-weight:bold;left:27.50px;width:65px;text-align:center;">View</div>
<div class="dd" style="left:126px;top:828px;width:198px;height:27px;background-color:#ffffe8"></div>
<div style="top:833.00px;font-size:16px;line-height:20px;-webkit-text-stroke:0.2px #ffffe8;left:130.50px;">Colorimetric</div>
<div class="b" style="left:303px;top:830px;width:21px;height:24px"></div>
<div class="ar" style="left:308px;top:840px"></div>
<div style="top:835.00px;font-size:15.9px;line-height:19.9px;-webkit-text-stroke:0.2px #f0f0f0;left:340.50px;">Rendering</div>
<div class="dd" style="left:21px;top:868px;width:353px;height:27px;background-color:#e0ffe0"></div>
<div style="top:872.00px;font-size:16px;line-height:20px;-webkit-text-stroke:0.2px #e0ffe0;left:26.00px;">PX720_Matte_HS_dye.icm</div>
<div class="b" style="left:353px;top:870px;width:21px;height:24px"></div>
<div class="ar" style="left:358px;top:880px"></div>
<div class="dd" style="left:382px;top:788px;width:353px;height:27px;background-color:#f0f0f0"></div>
<div style="top:793.00px;font-size:16px;line-height:20px;-webkit-text-stroke:0.2px #f0f0f0;left:386.50px;">*sRGB&nbsp; <span style="display:inline-block;width:3px"></span>(IEC6 1996-2.1 sRGB)</div>
<div class="b" style="left:714px;top:790px;width:21px;height:24px"></div>
<div class="ar" style="left:719px;top:800px"></div>
<div style="left:424px;top:816px;width:311px;height:53px;background:#808080"></div>
<div class="dd" style="left:429px;top:828px;width:201px;height:27px;background-color:#f0f0f0"></div>
<div style="top:833.00px;font-size:16px;line-height:20px;-webkit-text-stroke:0.2px #f0f0f0;left:433.50px;">Colorimetric</div>
<div class="b" style="left:609px;top:830px;width:21px;height:24px"></div>
<div class="ar" style="left:614px;top:840px"></div>
<div class="b " style="left:665px;top:828px;width:64px;height:37px"></div>
<div style="top:833.00px;font-size:20.5px;line-height:24.5px;font-weight:bold;left:664.50px;width:64px;text-align:center;">View</div>
<div class="dd" style="left:382px;top:868px;width:353px;height:27px;background-color:#f0f0f0"></div>
<div style="top:872.00px;font-size:16px;line-height:20px;-webkit-text-stroke:0.2px #f0f0f0;left:387.00px;">PX720_Matte_HS_dye.icm</div>
<div class="b" style="left:714px;top:870px;width:21px;height:24px"></div>
<div class="ar" style="left:719px;top:880px"></div>
</div>
</body></html>
